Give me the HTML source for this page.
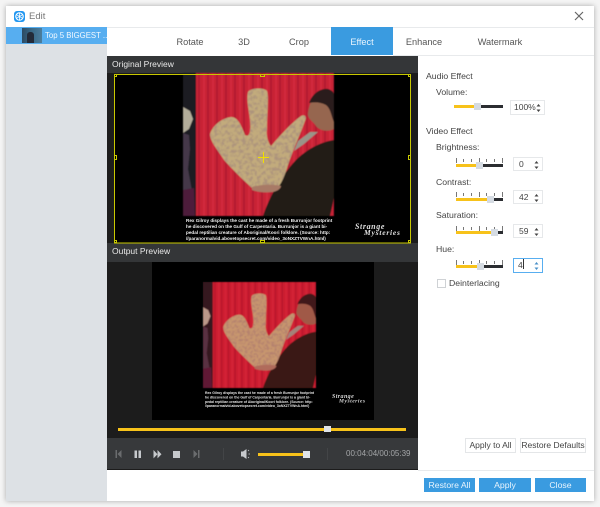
<!DOCTYPE html>
<html><head><meta charset="utf-8"><style>
html,body{margin:0;padding:0;background:#f4f4f4}
body{width:600px;height:507px;position:relative;overflow:hidden;font-family:"Liberation Sans",sans-serif;font-size:8.7px;color:#444}
div{position:absolute;box-sizing:border-box}
.t{white-space:nowrap;line-height:12px;height:12px}
.tab{top:36px;text-align:center;width:70px;font-size:9.2px;color:#555}
.tr{height:3px;background:#2b2d31}
.ty{height:3px;background:#f7c21a}
.h{background:#d5dbe2}
.sp{background:#fff;border:1px solid #e6e8ea;font-size:8.5px;line-height:12px;padding-left:5px;color:#444;white-space:nowrap}
.sp svg{position:absolute;right:3px;top:2px}
.tk{height:5px;width:1px;background:#777}
.btn{background:#3a9be0;color:#e8f4fd;text-align:center;line-height:14px;font-size:8.7px;height:14px;top:478px;white-space:nowrap}
.b2{background:#fff;border:1px solid #e4e6e8;color:#444;text-align:center;font-size:8.5px;line-height:13px;height:15px;top:438px;white-space:nowrap}
</style></head><body>
<div style="left:6px;top:6px;width:588px;height:495px;background:#fff;box-shadow:0 0 5px rgba(0,0,0,.3)"></div>
<!-- title bar -->
<div style="left:14px;top:11px;width:11px;height:11px;background:#2196f0;border-radius:3px"></div>
<svg style="position:absolute;left:14px;top:11px" width="11" height="11" viewBox="0 0 11 11"><circle cx="5.500" cy="5.500" r="3.700" fill="none" stroke="#fff" stroke-width="1.100"/><path d="M5.500 2v7M2.500 3.700l6 3.600M8.500 3.700l-6 3.600" stroke="#fff" stroke-width=".8"/></svg>
<div class="t" style="left:29px;top:11px;font-size:9.500px;color:#777">Edit</div>
<svg style="position:absolute;left:574px;top:11px" width="10" height="10" viewBox="0 0 10 10"><path d="M1 1l8 8M9 1l-8 8" stroke="#666" stroke-width="1.200" fill="none"/></svg>
<div style="left:6px;top:27px;width:588px;height:1px;background:#e8eaec"></div>
<!-- sidebar -->
<div style="left:6px;top:27px;width:101px;height:474px;background:#dde1e5"></div>
<div style="left:6px;top:27px;width:101px;height:17px;background:#57aef0"></div>
<div style="left:22px;top:28px;width:20px;height:15px;background:linear-gradient(90deg,#2c4a63,#3a6a88 50%,#4c7d9c)"></div>
<div style="left:27px;top:32px;width:7px;height:11px;background:#232a38;border-radius:3px 3px 0 0"></div>
<div class="t" style="left:45px;top:30px;color:#f2f9ff;font-size:7.800px">Top 5 BIGGEST ...</div>
<!-- tabs -->
<div class="t tab" style="left:155px">Rotate</div>
<div class="t tab" style="left:209px">3D</div>
<div class="t tab" style="left:264px">Crop</div>
<div style="left:331px;top:27px;width:62px;height:28px;background:#3a9be0"></div>
<div class="t tab" style="left:327px;color:#e8f4fd">Effect</div>
<div class="t tab" style="left:389px">Enhance</div>
<div class="t tab" style="left:465px">Watermark</div>
<div style="left:393px;top:55px;width:201px;height:1px;background:#e8eaec"></div>
<!-- preview panel -->
<div style="left:107px;top:56px;width:311px;height:414px;background:#1c1c1c"></div>
<div style="left:107px;top:56px;width:311px;height:17px;background:#343638"></div>
<div class="t" style="left:112px;top:58px;color:#e8e8e8;font-size:8.500px">Original Preview</div>
<div style="left:114px;top:74px;width:297px;height:169px;background:#000"></div>
<div style="left:107px;top:243px;width:311px;height:19px;background:#343638"></div>
<div class="t" style="left:112px;top:245px;color:#e8e8e8;font-size:8.500px">Output Preview</div>
<div style="left:152px;top:262px;width:222px;height:158px;background:#000"></div>
<svg style="position:absolute;left:0;top:0" width="600" height="507" viewBox="0 0 600 507">
<defs>
<filter id="bl" x="-5%" y="-5%" width="110%" height="110%"><feGaussianBlur stdDeviation=".6"/></filter>
<filter id="bs"><feGaussianBlur stdDeviation=".3"/></filter>
<filter id="tx" x="0" y="0" width="100%" height="100%"><feTurbulence type="fractalNoise" baseFrequency=".28" numOctaves="3" seed="4" result="n"/><feColorMatrix in="n" type="matrix" values="0 0 0 0 .42  0 0 0 0 .30  0 0 0 0 .20  4 0 0 0 -1.700"/><feComposite in2="SourceAlpha" operator="in" result="m"/><feMerge><feMergeNode in="SourceGraphic"/><feMergeNode in="m"/></feMerge></filter>
<pattern id="cur" width="9" height="10" patternUnits="userSpaceOnUse"><rect width="9" height="10" fill="#c82036"/><rect width="2" height="10" fill="#b31a31"/><rect x="5" width="2" height="10" fill="#d22c3d"/></pattern>
<g id="sc">
<rect x="183" y="73" width="151" height="143" fill="url(#cur)"/>
<rect x="183" y="73" width="13" height="143" fill="#1d1b22"/>
<path d="M183 107l7 4 3 8-4 10-6 4z" fill="#b3ad9a"/>
<path d="M183 133l6 2 1 14-2 20 4 22-9 4z" fill="#45394a"/>
<path d="M183 190l11-2 1 28h-12z" fill="#4d1c3a"/>
<path d="M263 216c7-21 19-41 33-56 10-10 24-18 38-20v58l-4 18z" fill="#211b19"/>
<path d="M298 141l12-9h8l-14 12-10 7z" fill="#9a9488"/>
<path d="M308 113c2-14 8-21 16-21 5 0 10 3 10 7v30c-6 3-14 2-18-3-3-5-9-7-8-13z" fill="#96664f"/>
<path d="M309 103c4-11 13-15 19-14 3 1 6 3 6 5v28c-3-6-3-13-8-17-6-3-11-3-17-2z" fill="#2b1d1c"/>
<g filter="url(#tx)">
<path d="M248 92C250 88 264 87 267 91 269 97 267 115 267 128 266 136 268 142 271 146 278 138 290 124 301 116 305 114 307 117 305 121 300 135 293 150 288 165 285 175 282 182 279 186 270 190 258 190 252 188 243 180 233 170 224 160 218 150 210 142 210 134 212 126 222 118 231 117 238 117 241 125 245 135 250 138 251 130 250 120 249 110 246 100 248 92Z" fill="#c2ab7c"/>
</g>
<path d="M252 187c10-3 22-3 29-1 0 2-3 5-8 6-8 1-16 0-21-2z" fill="#a87a66"/>
</g>
</defs>
<g filter="url(#bl)"><use href="#sc"/></g>
<g font-family="Liberation Sans" font-weight="700" fill="#f2f2f2" font-size="4.620" filter="url(#bs)">
<text x="186" y="222">Rex Gilroy displays the cast he made of a fresh Burrunjor footprint</text>
<text x="186" y="228">he discovered on the Gulf of Carpentaria. Burrunjor is a giant bi-</text>
<text x="186" y="234">pedal reptilian creature of Aboriginal/Koori folklore. (Source: http:</text>
<text x="186" y="240">//paranormalvid.abovetopsecret.com/video_3oNXZTVWnA.html)</text>
</g>
<g font-family="Liberation Serif" font-style="italic" font-weight="700" fill="#e0e0e0" filter="url(#bs)"><text x="355" y="229" font-size="8" letter-spacing=".6">Strange</text><text x="364" y="235" font-size="7.500" letter-spacing=".8">Mysteries</text></g>
<!-- output scene -->
<g transform="translate(203 282) scale(.7483 .7413) translate(-183 -73)" filter="url(#bl)"><use href="#sc"/></g>
<rect x="203" y="282" width="113" height="106" fill="#f00010" opacity=".12"/>
<g font-family="Liberation Sans" font-weight="700" fill="#e6e6e6" font-size="3.450" filter="url(#bs)">
<text x="205" y="394">Rex Gilroy displays the cast he made of a fresh Burrunjor footprint</text>
<text x="205" y="398.500">he discovered on the Gulf of Carpentaria. Burrunjor is a giant bi-</text>
<text x="205" y="403">pedal reptilian creature of Aboriginal/Koori folklore. (Source: http:</text>
<text x="205" y="407">//paranormalvid.abovetopsecret.com/video_3oNXZTVWnA.html)</text>
</g>
<g font-family="Liberation Serif" font-style="italic" font-weight="700" fill="#d4d4d4" filter="url(#bs)"><text x="332" y="398" font-size="6" letter-spacing=".4">Strange</text><text x="339" y="402.500" font-size="5.600" letter-spacing=".5">Mysteries</text></g>
<!-- crop frame -->
<g fill="none" stroke="#c8c800" stroke-width="1">
<rect x="114.500" y="74.500" width="296" height="168.500"/>
<rect x="114.500" y="74.500" width="2" height="2"/><rect x="408.500" y="74.500" width="2" height="2"/><rect x="114.500" y="240.500" width="2" height="2"/><rect x="408.500" y="240.500" width="2" height="2"/>
<rect x="260.500" y="74.500" width="4" height="2"/><rect x="260.500" y="240.500" width="4" height="2"/><rect x="114.500" y="155.500" width="2" height="4"/><rect x="408.500" y="155.500" width="2" height="4"/>
</g>
<path d="M258 157.500h11M263.500 152v11" stroke="#f0e000" stroke-width="1" fill="none"/>
</svg>
<!-- main slider -->
<div class="ty" style="left:118px;top:427.500px;width:288px"></div>
<div class="h" style="left:324px;top:426px;width:7px;height:6px;background:#dfe3e8"></div>
<!-- controls -->
<div style="left:107px;top:438px;width:311px;height:32px;background:#37393b"></div>
<div style="left:107px;top:469px;width:311px;height:1px;background:#1c1c1c"></div>
<div style="left:223px;top:448px;width:1px;height:12px;background:#434547"></div>
<div style="left:327px;top:448px;width:1px;height:12px;background:#434547"></div>
<svg style="position:absolute;left:107px;top:438px" width="311" height="32" viewBox="107 438 311 32">
<path d="M115.500 450h1.500v8h-1.500zM121.500 450v8l-4-4z" fill="#6a6c6e"/>
<path d="M134.500 450.500h2.500v7.500h-2.500zM138.500 450.500h2.500v7.500h-2.500z" fill="#c6c9cc"/>
<path d="M153.500 450l4 4.200-4 4.200zM157.500 450l4 4.200-4 4.200z" fill="#c6c9cc"/>
<rect x="173" y="451" width="7" height="7" fill="#c6c9cc"/>
<path d="M193.500 450l4 4-4 4zM198 450h1.500v8h-1.500z" fill="#6a6c6e"/>
<path d="M241 451.500h2l3.500-2.500v10l-3.500-2.500h-2z" fill="#c6c9cc"/>
<path d="M248 451l1-1M248.500 454h1.500M248 457l1 1" stroke="#c6c9cc" stroke-width=".8" fill="none"/>
</svg>
<div class="ty" style="left:258px;top:453px;width:50px;height:2.500px"></div>
<div class="h" style="left:303px;top:451px;width:7px;height:7px;background:#dfe3e8"></div>
<div class="t" style="left:346px;top:448px;color:#a4a6a8;font-size:8px">00:04:04/00:05:39</div>
<!-- right panel -->
<div class="t" style="left:426px;top:70px">Audio Effect</div>
<div class="t" style="left:436px;top:86px">Volume:</div>
<div class="tr" style="left:454px;top:105px;width:49px"></div>
<div class="ty" style="left:454px;top:105px;width:22px"></div>
<div class="h" style="left:474px;top:103px;width:7px;height:7px"></div>
<div class="sp" style="left:510px;top:100px;width:35px;height:15px;padding-left:3px">100%<svg width="5" height="10" viewBox="0 0 5 10"><path d="M2.500 1l2 2.500H.5zM2.500 9l-2-2.500h4z" fill="#444"/></svg></div>
<div class="t" style="left:426px;top:125px">Video Effect</div>
<div class="t" style="left:436px;top:141px">Brightness:</div>
<div class="t" style="left:436px;top:176px">Contrast:</div>
<div class="t" style="left:436px;top:209px">Saturation:</div>
<div class="t" style="left:436px;top:243px">Hue:</div>
<!-- sliders: brightness -->
<div class="tk" style="left:456px;top:158px"></div><div class="tk" style="left:463px;top:159px;height:3px"></div><div class="tk" style="left:471px;top:159px;height:3px"></div><div class="tk" style="left:479px;top:158px"></div><div class="tk" style="left:486px;top:159px;height:3px"></div><div class="tk" style="left:494px;top:159px;height:3px"></div><div class="tk" style="left:502px;top:158px"></div>
<div class="tr" style="left:456px;top:164px;width:47px"></div><div class="ty" style="left:456px;top:164px;width:22px"></div>
<div class="h" style="left:476px;top:162px;width:7px;height:7px"></div>
<div class="sp" style="left:513px;top:157px;width:30px;height:14px">0<svg width="5" height="10" viewBox="0 0 5 10"><path d="M2.500 1l2 2.500H.5zM2.500 9l-2-2.500h4z" fill="#444"/></svg></div>
<!-- contrast -->
<div class="tk" style="left:456px;top:192px"></div><div class="tk" style="left:463px;top:193px;height:3px"></div><div class="tk" style="left:471px;top:193px;height:3px"></div><div class="tk" style="left:479px;top:192px"></div><div class="tk" style="left:486px;top:193px;height:3px"></div><div class="tk" style="left:494px;top:193px;height:3px"></div><div class="tk" style="left:502px;top:192px"></div>
<div class="tr" style="left:456px;top:198px;width:47px"></div><div class="ty" style="left:456px;top:198px;width:32px"></div>
<div class="h" style="left:487px;top:196px;width:7px;height:7px"></div>
<div class="sp" style="left:513px;top:190px;width:30px;height:14px">42<svg width="5" height="10" viewBox="0 0 5 10"><path d="M2.500 1l2 2.500H.5zM2.500 9l-2-2.500h4z" fill="#444"/></svg></div>
<!-- saturation -->
<div class="tk" style="left:456px;top:226px"></div><div class="tk" style="left:463px;top:227px;height:3px"></div><div class="tk" style="left:471px;top:227px;height:3px"></div><div class="tk" style="left:479px;top:226px"></div><div class="tk" style="left:486px;top:227px;height:3px"></div><div class="tk" style="left:494px;top:227px;height:3px"></div><div class="tk" style="left:502px;top:226px"></div>
<div class="tr" style="left:456px;top:231px;width:47px"></div><div class="ty" style="left:456px;top:231px;width:37px"></div>
<div class="h" style="left:491px;top:229px;width:7px;height:7px"></div>
<div class="sp" style="left:513px;top:224px;width:30px;height:14px">59<svg width="5" height="10" viewBox="0 0 5 10"><path d="M2.500 1l2 2.500H.5zM2.500 9l-2-2.500h4z" fill="#444"/></svg></div>
<!-- hue -->
<div class="tk" style="left:456px;top:260px"></div><div class="tk" style="left:463px;top:261px;height:3px"></div><div class="tk" style="left:471px;top:261px;height:3px"></div><div class="tk" style="left:479px;top:260px"></div><div class="tk" style="left:486px;top:261px;height:3px"></div><div class="tk" style="left:494px;top:261px;height:3px"></div><div class="tk" style="left:502px;top:260px"></div>
<div class="tr" style="left:456px;top:265px;width:47px"></div><div class="ty" style="left:456px;top:265px;width:22px"></div>
<div class="h" style="left:477px;top:263px;width:7px;height:7px"></div>
<div class="sp" style="left:513px;top:258px;width:30px;height:15px;border-color:#58aef0;padding-left:4px">4<span style="display:inline-block;width:1px;height:10px;background:#333;vertical-align:-1px"></span><svg width="5" height="10" viewBox="0 0 5 10"><path d="M2.500 1l2 2.500H.5zM2.500 9l-2-2.500h4z" fill="#4a90c8"/></svg></div>
<div style="left:437px;top:279px;width:9px;height:9px;border:1px solid #cfd2d5;background:#fff"></div>
<div class="t" style="left:449px;top:277px">Deinterlacing</div>
<!-- buttons -->
<div class="b2" style="left:465px;width:51px">Apply to All</div>
<div class="b2" style="left:520px;width:66px">Restore Defaults</div>
<div style="left:418px;top:470px;width:176px;height:1px;background:#e8eaec"></div>
<div class="btn" style="left:424px;width:51px">Restore All</div>
<div class="btn" style="left:479px;width:52px">Apply</div>
<div class="btn" style="left:535px;width:51px">Close</div>
</body></html>
